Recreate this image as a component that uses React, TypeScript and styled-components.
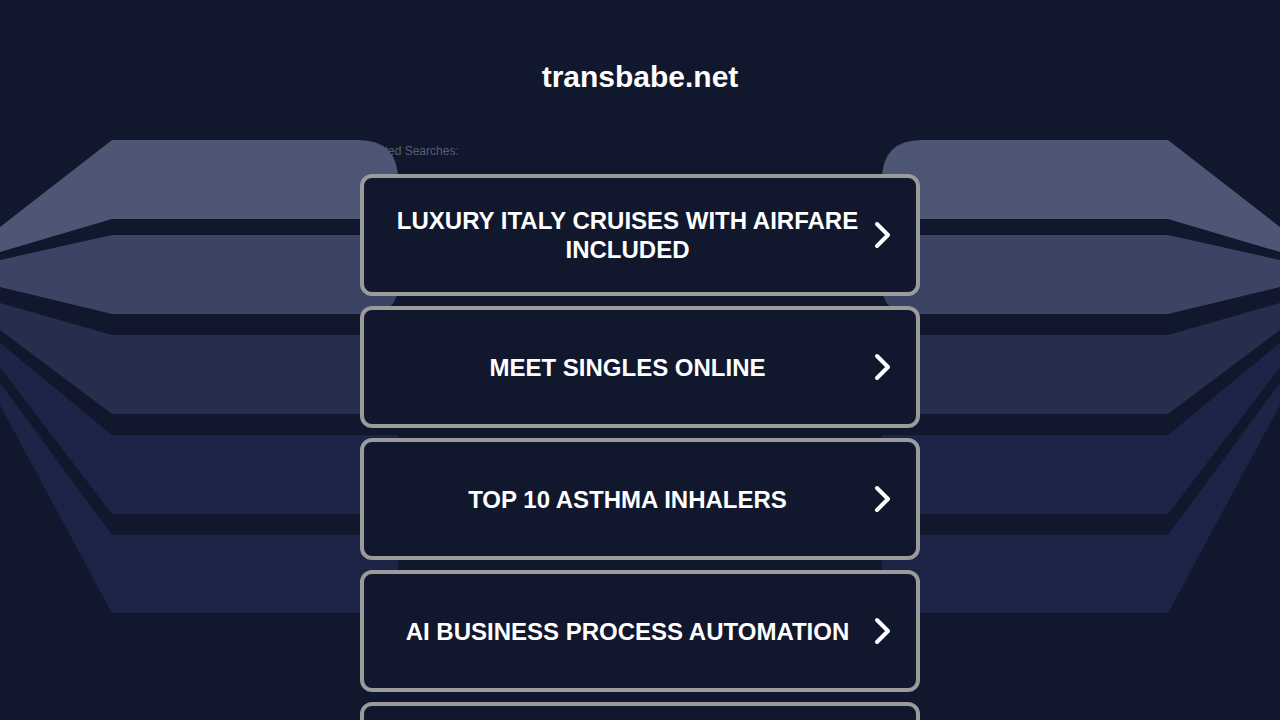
import styled, { createGlobalStyle } from 'styled-components';

const GlobalStyle = createGlobalStyle`
    html, body {
        margin: 0;
        padding: 0;
        background: #11172c;
        font-family: "Liberation Sans", Arial, sans-serif;
    }
`

const Page = styled.div`
    position: relative;
    min-height: 100vh;
    display: flex;
    flex-direction: column;
    align-items: center;
    overflow: hidden;
`

const Title = styled.h1`
    margin: 0;
    padding-top: 60px;
    font-size: 30px;
    line-height: 34px;
    font-weight: bold;
    color: #ffffff;
`

const Column = styled.div`
    width: 560px;
    display: flex;
    flex-direction: column;
`

const Label = styled.div`
    margin-top: 50px;
    margin-bottom: 16px;
    font-size: 12px;
    line-height: 14px;
    color: #565e77;
`

const List = styled.div`
    position: relative;
    z-index: 2;
    display: flex;
    flex-direction: column;
    gap: 10px;
`

const Card = styled.a`
    box-sizing: border-box;
    height: 122px;
    display: flex;
    align-items: center;
    padding: 0 24px 0 19px;
    border: 4px solid #9b9b9b;
    border-radius: 12px;
    background: #11172c;
    color: #ffffff;
    text-decoration: none;
    cursor: pointer;
`

const CardText = styled.span`
    flex: 1;
    text-align: center;
    font-size: 24px;
    line-height: 29px;
    font-weight: bold;
`

const Chevron = styled.svg`
    flex: none;
    width: 20px;
    height: 28px;
`

const Backdrop = styled.svg`
    position: absolute;
    left: 0;
    top: 0;
    width: 1280px;
    height: 720px;
    z-index: 1;
    pointer-events: none;
`

interface Band {
    yTL: number
    yT: number
    yB: number
    yBL: number
    rTop: number
    rBot: number
    fill: string
}

const bands: Band[] = [
    { yTL: 227, yT: 140, yB: 219, yBL: 252, rTop: 40, rBot: 0, fill: '#4d5675' },
    { yTL: 260, yT: 235, yB: 314, yBL: 287, rTop: 0, rBot: 30, fill: '#3b4465' },
    { yTL: 303, yT: 335, yB: 414, yBL: 330, rTop: 0, rBot: 0, fill: '#262e4e' },
    { yTL: 343, yT: 435, yB: 514, yBL: 367, rTop: 0, rBot: 0, fill: 'url(#dots)' },
    { yTL: 383, yT: 535, yB: 613, yBL: 405, rTop: 0, rBot: 30, fill: 'url(#dots)' },
]

const bandPath = ({ yTL, yT, yB, yBL, rTop, rBot }: Band) => {
    const x = 398
    return `M0 ${yTL} L112 ${yT} L${x - rTop} ${yT} Q${x} ${yT} ${x} ${yT + rTop} ` +
        `L${x} ${yB - rBot} Q${x} ${yB} ${x - rBot} ${yB} L112 ${yB} L0 ${yBL} Z`
}

const searches = [
    'LUXURY ITALY CRUISES WITH AIRFARE INCLUDED',
    'MEET SINGLES ONLINE',
    'TOP 10 ASTHMA INHALERS',
    'AI BUSINESS PROCESS AUTOMATION',
    'CHEAP FLIGHTS TO EUROPE',
]

const Decoration = () => (
    <Backdrop viewBox="0 0 1280 720">
        <defs>
            <pattern id="dots" width="3" height="3" patternUnits="userSpaceOnUse">
                <rect width="3" height="3" fill="#1c2548" />
                <rect width="1" height="1" fill="#18203f" />
            </pattern>
        </defs>
        <g>
            {bands.map((b, i) => <path key={i} d={bandPath(b)} fill={b.fill} />)}
        </g>
        <g transform="translate(1280 0) scale(-1 1)">
            {bands.map((b, i) => <path key={i} d={bandPath(b)} fill={b.fill} />)}
        </g>
    </Backdrop>
)

export default function App() {
    return (
        <>
            <GlobalStyle />
            <Page>
                <Decoration />
                <Title>transbabe.net</Title>
                <Column>
                    <Label>Related Searches:</Label>
                    <List>
                        {searches.map((s) => (
                            <Card key={s}>
                                <CardText>{s}</CardText>
                                <Chevron viewBox="0 0 20 28">
                                    <polyline points="5,3 16,14 5,25" fill="none" stroke="#ffffff"
                                        strokeWidth="4" strokeLinecap="round" strokeLinejoin="round" />
                                </Chevron>
                            </Card>
                        ))}
                    </List>
                </Column>
            </Page>
        </>
    );
}
